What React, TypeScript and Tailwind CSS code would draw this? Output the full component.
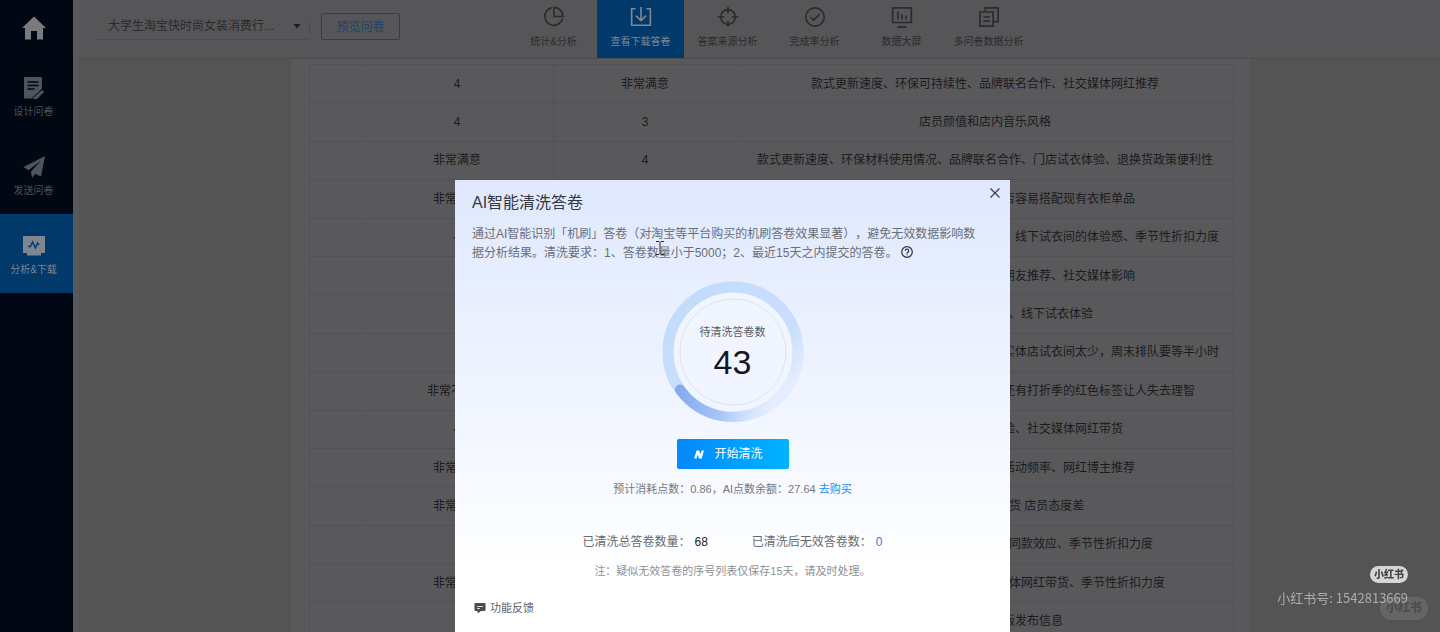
import type { ReactNode } from "react";

const navItems: { label: string; active?: boolean; icon: ReactNode }[] = [
  {
    label: "统计&分析",
    icon: (
      <>
        <path d="M9.5 1.8A9.8 9.8 0 1 0 21.300 14" />
        <path d="M12 1.5v10h9.800A10 10 0 0 0 12 1.5Z" />
      </>
    ),
  },
  {
    label: "查看下载答卷",
    active: true,
    icon: (
      <>
        <path d="M6 3H1.8v18h20.4V3H18" />
        <path d="M12 1v14M6.5 10.5 12 16l5.500-5.500" />
      </>
    ),
  },
  {
    label: "答案来源分析",
    icon: (
      <>
        <circle cx="12" cy="12" r="8" />
        <path d="M12 1v7M12 16v7M1 12h7M16 12h7" />
      </>
    ),
  },
  {
    label: "完成率分析",
    icon: (
      <>
        <circle cx="12" cy="12" r="10" />
        <path d="m7 12 3.500 3.500L17 9" />
      </>
    ),
  },
  {
    label: "数据大屏",
    icon: (
      <>
        <path d="M1.800 2h20.400v16H1.800zM7 23h10M7.500 6v8.500M12 9v5.500M16.500 10.500v4" />
      </>
    ),
  },
  {
    label: "多问卷数据分析",
    icon: (
      <>
        <path d="M8 6V2h14v15h-5" />
        <path d="M2 6.500h14.500V22H2zM6 12h7M6 16.500h7" />
      </>
    ),
  },
];

const rows: [string, string, string][] = [
  ["4", "非常满意", "款式更新速度、环保可持续性、品牌联名合作、社交媒体网红推荐"],
  ["4", "3", "店员颜值和店内音乐风格"],
  ["非常满意", "4", "款式更新速度、环保材料使用情况、品牌联名合作、门店试衣体验、退换货政策便利性"],
  ["非常满意", "", "面料舒适且耐穿、款式百搭、是否容易搭配现有衣柜单品"],
  ["4", "", "款式更新速度、品牌联名合作、社交媒体推荐度、线下试衣间的体验感、季节性折扣力度"],
  ["", "", "款式更新速度、品牌联名合作、朋友推荐、社交媒体影响"],
  ["", "", "款式更新、品牌联名合作、线下试衣体验"],
  ["", "", "线上尺码不准经常要退换货\uff0c客服回复慢\uff0c而且实体店试衣间太少\uff0c周末排队要等半小时"],
  ["非常不满意", "", "店铺橱窗陈列吸引人\uff0c每次路过都想进去\uff0c还有打折季的红色标签让人失去理智"],
  ["4", "", "款式更新的速度、线下试衣体验、社交媒体网红带货"],
  ["非常满意", "", "款式更新速度、品牌联名合作、活动频率、网红博主推荐"],
  ["非常满意", "", "尺码总不全 经常断码缺货 店员态度差"],
  ["", "", "款式更新速度、品牌联名合作、明星同款效应、季节性折扣力度"],
  ["非常满意", "", "款式更新速度、品牌联名合作、社交媒体网红带货、季节性折扣力度"],
  ["", "", "限量款和联名款新版发布信息"],
];

function Sidebar() {
  return (
    <nav className="flex w-[73px] shrink-0 flex-col bg-[#020813] text-[10px] leading-4 text-[#4c5058]">
      <a href="#home" aria-label="首页" className="flex h-14 items-center justify-center pr-1.5">
        <svg viewBox="0 0 24 24" className="h-6 w-6" fill="#7a7a7c">
          <path d="M12 .500 24 12h-3v11.500h-6V15H9v8.500H3V12H0z" />
        </svg>
      </a>
      <a
        href="#design"
        className="flex h-[79px] flex-col items-center justify-center gap-1 pt-1 pr-1.5"
      >
        <svg viewBox="0 0 22 24" className="h-6 w-[22px]">
          <path
            fill="#4f535b"
            d="M2 1h16a1 1 0 0 1 1 1v10.500L9.500 22.500H2a1 1 0 0 1-1-1V2a1 1 0 0 1 1-1Z"
          />
          <path stroke="#020813" strokeWidth="1.500" d="M4.500 6h11M4.500 9.500h11M4.500 13h7" />
          <path
            fill="#4f535b"
            stroke="#020813"
            strokeWidth="1"
            d="m19 13.500 2.700 2.400-7.700 7.600H9.500l.500-2z"
          />
        </svg>
        设计问卷
      </a>
      <a
        href="#send"
        className="flex h-[79px] flex-col items-center justify-center gap-1 pt-1 pr-1.5"
      >
        <svg viewBox="0 0 22 24" className="h-6 w-[22px]" fill="#4f535b">
          <path d="M22 1 .500 12l5 3.200L18 5.500 8 16.500l1 6.500 3.200-4.300L18 21.500z" />
        </svg>
        发送问卷
      </a>
      <a
        href="#analysis"
        className="flex h-[79px] flex-col items-center justify-center gap-1 bg-[#01396b] pt-1 pr-1.5 text-[#7c8692]"
      >
        <svg viewBox="0 0 22 24" className="h-6 w-[22px]">
          <path fill="#7e8790" d="M0 2h22v17h-4v2.500H4V19H0z" />
          <path
            fill="none"
            stroke="#01396b"
            strokeWidth="1.400"
            d="M5 12.500h2.500L9.500 8l3 6 2-5 1.500 2"
          />
        </svg>
        分析&amp;下载
      </a>
    </nav>
  );
}

function Header() {
  return (
    <header className="flex h-[59px] shrink-0 border-b border-[#4c4c4e] bg-[#565658]">
      <div className="flex w-[431px] shrink-0 items-start pt-[13px] pl-[17px]">
        <button
          type="button"
          className="flex h-[27px] w-[213px] items-center justify-between border-b border-[#4d4d4f] pr-2 pl-3 text-xs text-[#2a2a2c]"
        >
          大学生淘宝快时尚女装消费行...
          <svg viewBox="0 0 8 5" className="h-[5px] w-2" fill="#1e1e20">
            <path d="M.500 0h7L4 4.500z" />
          </svg>
        </button>
        <span className="mt-2 h-3 w-px bg-[#4a4a4c]" />
        <button
          type="button"
          className="ml-[11px] h-[27px] w-[79px] rounded-xs border border-[#17456e] text-xs text-[#17456e]"
        >
          预览问卷
        </button>
      </div>
      <nav className="flex">
        {navItems.map((item) => (
          <a
            key={item.label}
            href="#tab"
            className={
              item.active
                ? "flex h-[58px] w-[87px] flex-col items-center gap-1.5 bg-[#01396b] pt-1.5 text-[10px] leading-4 whitespace-nowrap text-[#7c8894]"
                : "flex h-[58px] w-[87px] flex-col items-center gap-1.5 pt-1.5 text-[10px] leading-4 whitespace-nowrap text-[#2b2b2d]"
            }
          >
            <svg
              viewBox="0 0 24 24"
              className="h-[22px] w-[22px] shrink-0"
              fill="none"
              stroke="currentColor"
              strokeWidth="1.800"
            >
              {item.icon}
            </svg>
            {item.label}
          </a>
        ))}
      </nav>
    </header>
  );
}

function AnswerTable() {
  return (
    <div className="flex min-h-0 flex-1 overflow-hidden bg-[#545454] pr-[190px] pl-[212px]">
      <div className="flex-1 bg-[#59595b] pt-[5px] pr-4 pl-[18px]">
        <table className="h-[577px] w-full table-fixed border-collapse border border-[#535355] text-center text-xs text-[#1b1b1d]">
          <colgroup>
            <col className="w-[51px]" />
            <col className="w-[193px]" />
            <col className="w-[183px]" />
            <col />
          </colgroup>
          <tbody>
            {rows.map(([first, second, text], i) => (
              <tr key={i} className="border-b border-[#525254]">
                <td className="border-r border-[#565658]" />
                <td className="border-r border-[#525254]">{first}</td>
                <td className="border-r border-[#565658]">{second}</td>
                <td className="whitespace-nowrap [text-spacing-trim:space-all]">{text}</td>
              </tr>
            ))}
          </tbody>
        </table>
      </div>
    </div>
  );
}

function Gauge() {
  return (
    <div className="relative flex h-[142px] w-[142px] flex-col items-center justify-center pt-1">
      <svg viewBox="0 0 142 142" className="absolute inset-0 h-full w-full" fill="none">
        <defs>
          <linearGradient id="ring" x1="0.200" y1="0.100" x2="0.850" y2="0.850">
            <stop offset="0" stopColor="#c4dcfb" />
            <stop offset="0.650" stopColor="#c9defc" />
            <stop offset="1" stopColor="#e4eefe" />
          </linearGradient>
          <linearGradient id="arc" gradientUnits="userSpaceOnUse" x1="14" y1="108" x2="112" y2="130">
            <stop offset="0" stopColor="#83a8ef" />
            <stop offset="0.500" stopColor="#a9c6f7" />
            <stop offset="1" stopColor="#dce9fe" stopOpacity="0" />
          </linearGradient>
        </defs>
        <circle cx="71" cy="71" r="65" stroke="url(#ring)" strokeWidth="11" />
        <circle cx="71" cy="71" r="59" fill="#f1f5ff" />
        <path
          d="M18 108.500A65 65 0 0 0 112 121.500"
          stroke="url(#arc)"
          strokeWidth="10"
          strokeLinecap="round"
        />
        <circle cx="71" cy="71" r="53" stroke="#dde3f1" />
      </svg>
      <span className="relative text-[11px] leading-4 text-[#56595f]">待清洗答卷数</span>
      <span className="relative text-[34px] leading-[44px] text-[#15181f]">43</span>
    </div>
  );
}

function CleanDialog() {
  return (
    <div className="fixed inset-0 flex items-start justify-center pt-[180px] pl-[25px]">
      <section
        role="dialog"
        aria-labelledby="clean-title"
        className="relative flex min-h-[460px] w-[555px] flex-col items-center bg-linear-to-b from-[#dfe8fd] via-[#eff4ff] via-45% to-white to-85% px-[17px] pt-[11px] [text-spacing-trim:space-all]"
      >
        <button type="button" aria-label="关闭" className="absolute top-[7px] right-[9px] h-3 w-3">
          <svg viewBox="0 0 12 12" className="h-3 w-3" stroke="#42464f" strokeWidth="1.400">
            <path d="m1.500 1.500 9 9M10.500 1.500l-9 9" />
          </svg>
        </button>
        <h1 id="clean-title" className="w-full text-base leading-6 text-[#333842]">
          AI智能清洗答卷
        </h1>
        <p className="mt-2.5 w-full pr-2 text-xs leading-[19px] text-[#6a6f79]">
          通过AI智能识别「机刷」答卷&#65288;对淘宝等平台购买的机刷答卷效果显著&#65289;&#65292;避免无效数据影响数据分析结果。清洗要求&#65306;1、答卷数量小于5000&#65307;2、最近15天之内提交的答卷。
          <button type="button" aria-label="帮助" className="ml-1 inline-block h-3 w-3 align-[-1px]">
            <svg viewBox="0 0 12 12" className="h-3 w-3" fill="none" stroke="#2f333b" strokeWidth="1.200">
              <circle cx="6" cy="6" r="5.300" />
              <path d="M4.300 4.800a1.700 1.700 0 1 1 2.600 1.400c-.600.400-.900.600-.900 1.200M6 8.200v1.100" />
            </svg>
          </button>
        </p>
        <svg
          viewBox="0 0 8 16"
          className="absolute top-[60px] left-[201px] h-4 w-2"
          fill="none"
          stroke="#22262d"
        >
          <path d="M0 1.500h3l1 1 1-1h3M0 14.500h3l1-1 1 1h3M4 2.500v11" />
        </svg>
        <div className="mt-[18px]">
          <Gauge />
        </div>
        <button
          type="button"
          className="mt-4 flex h-[30px] w-28 items-center justify-center gap-2.5 rounded-xs bg-linear-to-r from-[#0788fe] to-[#00b3ff] pr-2 text-xs text-white"
        >
          <svg viewBox="0 0 11 10" className="h-[9px] w-2.5" fill="#ffffff">
            <path d="M2.800 .500h2.900l1.500 4.500L8.400.500H11L8.400 9.500H5.600L4.200 5 2.900 9.500H.200z" />
          </svg>
          开始清洗
        </button>
        <p className="mt-3 text-[11px] leading-4 text-[#75787e]">
          预计消耗点数&#65306;0.86&#65292;AI点数余额&#65306;27.64{" "}
          <a href="#buy" className="text-[#1890e8]">
            去购买
          </a>
        </p>
        <dl className="mt-9 flex gap-11 text-xs leading-[18px] text-[#686b70]">
          <div className="flex gap-1">
            <dt>已清洗总答卷数量&#65306;</dt>
            <dd className="text-[#1f2227]">68</dd>
          </div>
          <div className="flex gap-1">
            <dt>已清洗后无效答卷数&#65306;</dt>
            <dd className="text-[#1e88dc]">0</dd>
          </div>
        </dl>
        <p className="mt-3 text-[11px] leading-4 text-[#8d9094]">
          注&#65306;疑似无效答卷的序号列表仅保存15天&#65292;请及时处理。
        </p>
        <button
          type="button"
          className="mt-[21px] flex items-center gap-1 self-start pl-0.5 text-[11px] leading-4 text-[#606266]"
        >
          <svg viewBox="0 0 12 12" className="h-3 w-3">
            <path
              fill="#4a4d50"
              d="M1.500 1h9a1 1 0 0 1 1 1v6a1 1 0 0 1-1 1H7l-3.500 2.500V9h-2a1 1 0 0 1-1-1V2a1 1 0 0 1 1-1Z"
            />
            <path stroke="#d0d2d4" d="M3 4.500h6M3 6.500h3" />
          </svg>
          功能反馈
        </button>
      </section>
    </div>
  );
}

function Watermark() {
  return (
    <div className="fixed right-3 bottom-3 flex flex-col items-end">
      <span className="mr-5 h-[17px] w-[38px] rounded-full bg-[#d6d6d6] text-center text-[10px] leading-[17px] font-black text-[#444446]">
        小红书
      </span>
      <div className="relative mt-[13px] h-6">
        <span className="absolute right-0 bottom-0 h-[23px] w-12 rounded-full bg-[#656565] text-center text-xs leading-[23px] font-black text-[#4e4e50]">
          小红书
        </span>
        <p className="relative mr-5 -mt-2 font-['Noto_Sans_CJK_SC',sans-serif] text-[13px] leading-5 text-[#adadad]">
          小红书号: 1542813669
        </p>
      </div>
    </div>
  );
}

export default function App() {
  return (
    <div className="flex h-screen overflow-hidden bg-[#59595b] font-['Liberation_Sans','Noto_Sans_CJK_SC',sans-serif]">
      <Sidebar />
      <main className="ml-1.5 flex min-w-0 flex-1 flex-col">
        <Header />
        <AnswerTable />
      </main>
      <CleanDialog />
      <Watermark />
    </div>
  );
}
